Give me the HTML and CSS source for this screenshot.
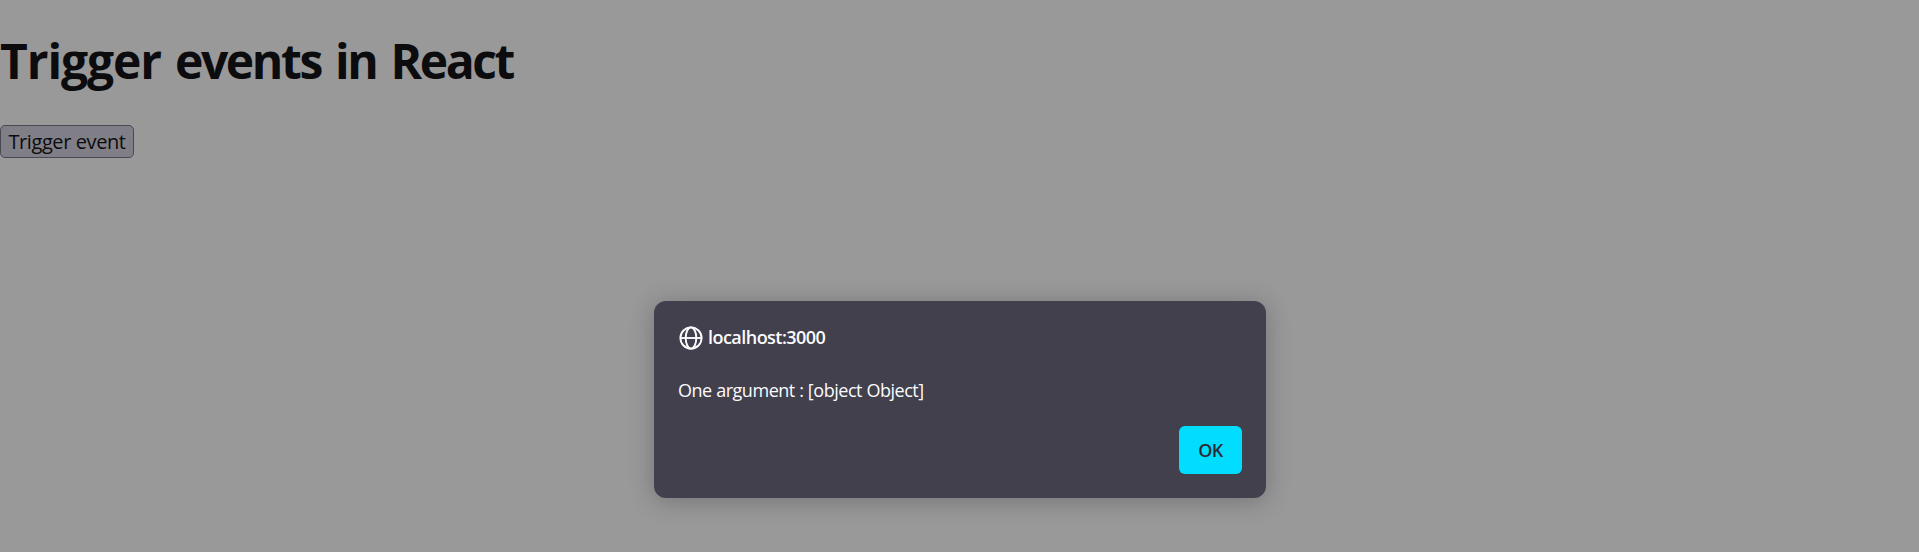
FILE: index.html
```html
<!DOCTYPE html>
<html lang="en">
<head>
<meta charset="utf-8">
<title>Trigger events in React</title>
<link rel="stylesheet" href="styles.css">
</head>
<body>
<main class="page">
<h1 class="title"><span class="wide">Trigger</span> events in React</h1>
<button class="trigger">Trigger event</button>
</main>
<div class="overlay">
<section class="dialog" role="dialog">
<header class="origin">
<svg class="globe" viewBox="0 0 24 24" fill="none" stroke="currentColor" stroke-width="1.9"><circle cx="12" cy="12" r="10.6"/><ellipse cx="12" cy="12" rx="5.3" ry="10.6"/><path d="M1.4 12h21.2"/></svg>
<span class="host">localhost:3000</span>
</header>
<p class="message">One argument : [object Object]</p>
<footer class="actions"><button class="ok">OK</button></footer>
</section>
</div>
</body>
</html>
```
FILE: styles.css
```css
* { box-sizing: border-box; }
body {
  margin: 0;
  height: 552px;
  overflow: hidden;
  background: #99999a;
  color: #0c0c0e;
  font-family: "Open Sans", "Noto Sans", sans-serif;
}
.page {
  display: flex;
  flex-direction: column;
  align-items: flex-start;
  padding-top: 28px;
}
.title {
  margin: 0 0 31px;
  font-size: 48px;
  line-height: 66px;
  font-weight: 700;
  letter-spacing: -2.4px;
  word-spacing: 4px;
  white-space: nowrap;
}
.wide { letter-spacing: -1.1px; }
.trigger {
  width: 134px;
  height: 33px;
  padding: 0;
  border: 1px solid #4a4853;
  border-radius: 5px;
  background: #807e86;
  color: #0c0c0e;
  font: 400 20px/31px "Open Sans", sans-serif;
  letter-spacing: -0.4px;
  white-space: nowrap;
}
.overlay {
  position: absolute;
  inset: 0;
  display: flex;
  justify-content: center;
  align-items: flex-start;
  padding: 301px 0 0 1px;
}
.dialog {
  width: 612px;
  height: 197px;
  padding: 24px;
  border-radius: 12px;
  background: #42404d;
  box-shadow: 0 3px 24px rgba(40, 40, 44, 0.32);
  color: #fbfbfe;
}
.origin {
  display: flex;
  align-items: center;
  gap: 5px;
  height: 25px;
}
.globe { width: 24px; height: 24px; margin-left: 1px; }
.host {
  font-size: 18px;
  font-weight: 600;
  line-height: 25px;
  letter-spacing: -0.53px;
}
.message {
  margin: 28px 0 24px;
  font-size: 18px;
  line-height: 24px;
  letter-spacing: -0.47px;
  word-spacing: 0.2px;
}
.actions { display: flex; justify-content: flex-end; }
.ok {
  width: 63px;
  height: 48px;
  padding: 0;
  border: 0;
  border-radius: 6px;
  background: #00ddff;
  color: #2b2a33;
  font: 600 18px/48px "Open Sans", sans-serif;
  letter-spacing: -0.6px;
}
```
